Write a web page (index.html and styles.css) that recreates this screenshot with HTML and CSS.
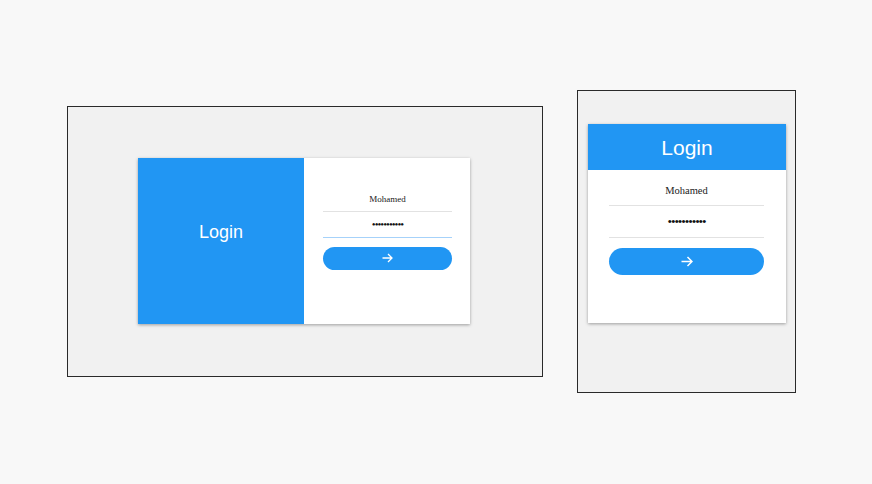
FILE: index.html
```html
<!DOCTYPE html>
<html>
<head>
<meta charset="utf-8">
<link rel="stylesheet" href="styles.css">
</head>
<body>
<div class="frame frame-wide">
  <div class="card card-wide">
    <div class="side">Login</div>
    <div class="form form-wide">
      <div class="field">Mohamed</div>
      <div class="field field-pass focused">•••••••••••</div>
      <div class="btn">
        <svg width="11" height="10" viewBox="0 0 11 10"><path d="M0.5 5H10M6 1L10 5L6 9" fill="none" stroke="#fff" stroke-width="1.3"/></svg>
      </div>
    </div>
  </div>
</div>
<div class="frame frame-narrow">
  <div class="card card-narrow">
    <div class="head">Login</div>
    <div class="form form-narrow">
      <div class="field">Mohamed</div>
      <div class="field field-pass">•••••••••••</div>
      <div class="btn">
        <svg width="12" height="11" viewBox="0 0 12 11"><path d="M0.5 5.5H11M6.5 1L11 5.5L6.5 10" fill="none" stroke="#fff" stroke-width="1.5"/></svg>
      </div>
    </div>
  </div>
</div>
</body>
</html>
```
FILE: styles.css
```css
* { box-sizing: border-box; }
html, body { margin: 0; height: 100%; }
body {
  background: #f8f8f8;
  display: flex;
  align-items: center;
  padding-left: 67px;
  gap: 34px;
  font-family: "Liberation Sans", Arial, sans-serif;
}
.frame {
  border: 1px solid #2a2a2a;
  background: #f1f1f1;
  display: flex;
}
.frame-wide {
  width: 476px;
  height: 271px;
  align-items: center;
  justify-content: center;
  padding: 0 2px 2px 0;
  margin-top: -1px;
}
.frame-narrow {
  width: 219px;
  height: 303px;
  flex-direction: column;
  padding: 33px 8px 0 10px;
  margin-top: -1px;
}
.card {
  background: #fff;
  box-shadow: 0 1px 3px rgba(0,0,0,0.35);
  display: flex;
}
.card-wide { width: 332px; height: 166px; }
.card-narrow { width: 198px; height: 199px; flex-direction: column; }
.side {
  width: 166px;
  background: #2196f3;
  color: #fff;
  font-size: 18px;
  display: flex;
  align-items: center;
  justify-content: center;
  padding-bottom: 16px;
}
.head {
  height: 46px;
  background: #2196f3;
  color: #fff;
  font-size: 21px;
  display: flex;
  align-items: center;
  justify-content: center;
  padding-top: 1px;
}
.form { display: flex; flex-direction: column; }
.form-wide { width: 166px; padding: 28px 18px 0 19px; }
.form-narrow { padding: 4px 22px 0 21px; }
.field {
  font-family: "Liberation Serif", "Times New Roman", serif;
  color: #222;
  text-align: center;
  border-bottom: 1px solid #e2e2e2;
  display: flex;
  align-items: center;
  justify-content: center;
}
.form-wide .field { height: 26px; font-size: 9px; padding-top: 2px; }
.form-narrow .field { height: 32px; font-size: 10.5px; padding-top: 2px; }
.field-pass { color: #111; }
.form-wide .field-pass { font-size: 11px; letter-spacing: -1px; padding-top: 0; }
.form-narrow .field-pass { font-size: 13px; letter-spacing: -1.1px; padding-top: 0; }
.form-wide .focused { border-bottom: 1px solid #a6d2fa; }
.btn {
  background: #2196f3;
  border-radius: 14px;
  display: flex;
  align-items: center;
  justify-content: center;
}
.form-wide .btn { height: 23px; margin-top: 9px; }
.form-narrow .btn { height: 27px; margin-top: 10px; }
```
